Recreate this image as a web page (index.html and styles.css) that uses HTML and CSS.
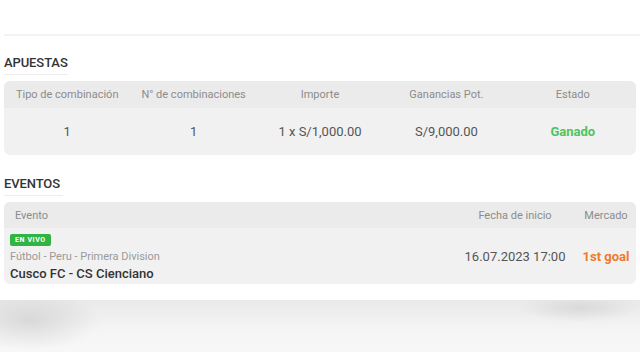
FILE: index.html
```html
<!DOCTYPE html>
<html lang="es">
<head>
<meta charset="utf-8">
<link rel="stylesheet" href="styles.css">
</head>
<body>
<div class="page">
  <div class="top"></div>
  <section class="section">
    <h2 class="title">APUESTAS</h2>
    <div class="box">
      <div class="row head bets">
        <div>Tipo de combinación</div>
        <div>N° de combinaciones</div>
        <div>Importe</div>
        <div>Ganancias Pot.</div>
        <div>Estado</div>
      </div>
      <div class="row body bets">
        <div>1</div>
        <div>1</div>
        <div>1 x S/1,000.00</div>
        <div>S/9,000.00</div>
        <div class="won">Ganado</div>
      </div>
    </div>
  </section>
  <section class="section ev">
    <h2 class="title">EVENTOS</h2>
    <div class="box">
      <div class="row head events">
        <div class="c-event">Evento</div>
        <div class="c-date">Fecha de inicio</div>
        <div class="c-market">Mercado</div>
      </div>
      <div class="row ebody events">
        <div class="c-event">
          <span class="live">EN VIVO</span>
          <div class="league">Fútbol - Peru - Primera Division</div>
          <div class="match">Cusco FC - CS Cienciano</div>
        </div>
        <div class="c-date date">16.07.2023 17:00</div>
        <div class="c-market market">1st goal</div>
      </div>
    </div>
  </section>
  <div class="bottom"></div>
</div>
</body>
</html>
```
FILE: styles.css
```css
* { box-sizing: border-box; margin: 0; padding: 0; }
html, body { width: 640px; height: 352px; overflow: hidden; background: #fff; }
body { font-family: Roboto, "Liberation Sans", sans-serif; color: #555; }
.page { display: flex; flex-direction: column; height: 352px; }
.top { height: 36px; border-bottom: 2px solid #f3f3f3; margin-left: 4px; flex: none; }
.section { padding: 0 4px; flex: none; }
.title {
  font-size: 13px; font-weight: 500; color: #333; letter-spacing: -0.1px;
  display: inline-block; padding: 0 0 4px 0; border-bottom: 1px solid #ececec;
  margin-top: 19px; line-height: 15px;
}
.ev .title { margin-top: 21px; padding-right: 3px; }
.box { border-radius: 6px; overflow: hidden; background: #f1f1f1; margin-top: 6px; }
.row { display: grid; align-items: center; }
.bets { grid-template-columns: repeat(5, 1fr); text-align: center; }
.head { background: #ebebeb; height: 27px; font-size: 11px; color: #8c8c8c; }
.body { height: 47px; font-size: 13px; color: #555; padding-bottom: 1px; }
.won { color: #4fc35d; font-weight: 700; }
.events { grid-template-columns: 1fr 122px 60px; }
.head.events { height: 26px; }
.c-event { padding-left: 11px; }
.c-date { text-align: center; }
.c-market { text-align: center; }
.ebody { height: 56px; padding-top: 4px; padding-bottom: 2px; }
.ebody .c-event { padding-left: 6px; display: flex; flex-direction: column; align-items: flex-start; }
.live {
  background: #2fb445; color: #fff; font-size: 7px; font-weight: 700;
  padding: 0 5px; height: 12px; line-height: 12px; border-radius: 2px; letter-spacing: 0.6px;
}
.league { font-size: 11px; color: #9a9a9a; margin-top: 5px; line-height: 12px; }
.match { font-size: 13px; color: #333; font-weight: 500; margin-top: 3px; line-height: 15px; }
.date { font-size: 13px; color: #555; align-self: start; padding-top: 17px; }
.market { font-size: 13px; color: #f07a2c; font-weight: 700; align-self: start; padding-top: 17px; }
.bottom {
  margin-top: 16px; flex: 1;
  background:
    radial-gradient(ellipse 70px 30px at 30px 20px, rgba(200,200,200,0.6), rgba(220,220,220,0) 100%),
    radial-gradient(ellipse 60px 14px at 580px 8px, rgba(205,205,205,0.6), rgba(220,220,220,0) 100%),
    linear-gradient(#e9e9e9, #f5f5f5 60%, #f7f7f7);
}
```
